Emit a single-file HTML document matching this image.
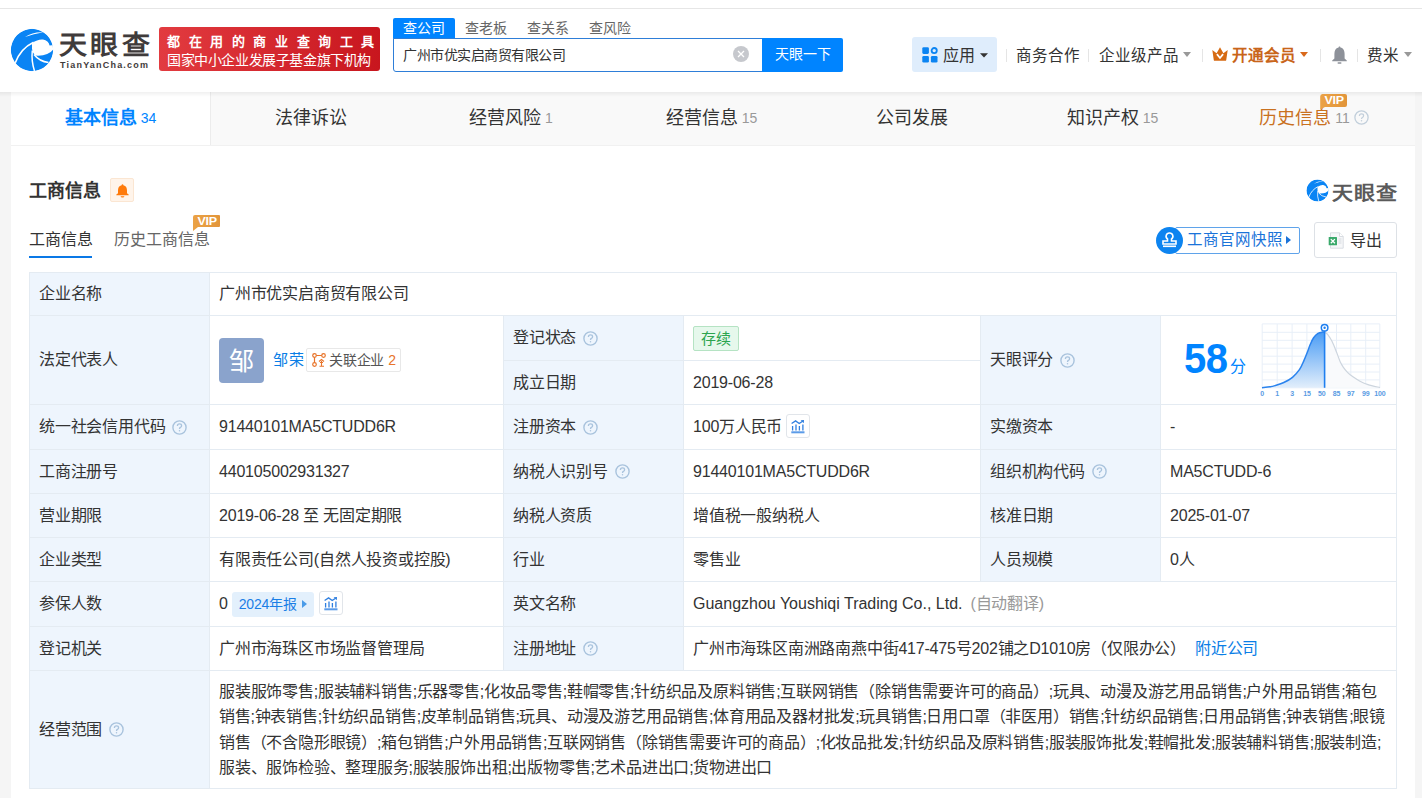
<!DOCTYPE html>
<html lang="zh-CN">
<head>
<meta charset="utf-8">
<style>
*{margin:0;padding:0;box-sizing:border-box}
html,body{width:1422px;height:798px;overflow:hidden;background:#f5f5f5;font-family:"Liberation Sans",sans-serif;color:#333}
.a{position:absolute;white-space:nowrap}
#hdr{position:absolute;left:0;top:0;width:1422px;height:92px;background:#fff;}
#topline{position:absolute;left:0;top:8px;width:1422px;height:1px;background:#e6e6e6}
#card{position:absolute;left:11px;top:92px;width:1404px;height:706px;background:#fff}
.tab{position:absolute;top:92px;height:53px;background:#f9f9f9;font-size:18px;line-height:53px;text-align:center;color:#333}
.tab small{font-size:14px;color:#999;margin-left:4px;position:relative;top:-1.5px}
.cell{position:absolute;border-right:1px solid #e4ebf2;border-bottom:1px solid #e4ebf2;font-size:16px;line-height:20px;padding-left:10px;display:flex;align-items:center;white-space:nowrap}
.lb{background:#eef5fd}
.q{display:inline-block;width:14px;height:14px;border:1px solid #b7cfe6;border-radius:50%;color:#9fbddb;font-size:10px;line-height:12px;text-align:center;margin-left:7px}

.c{position:absolute;font-size:16px;letter-spacing:-0.2px;line-height:22px;display:flex;align-items:center;white-space:nowrap;color:#333}
.c.lb{background:#eef5fd;padding-left:9px}
.c.v{background:#fff;padding-left:9px}
.tag-g{display:inline-block;height:25px;line-height:23px;padding:0 7px;border:1px solid #b5e3c3;background:#e6f8ec;color:#2ba44e;font-size:15px;border-radius:2px}
.tag-b{display:inline-flex;align-items:center;height:25px;padding:0 7px 0 7px;background:#e3f0fc;color:#1a7ee6;font-size:14px;border-radius:3px;margin-left:4px}
.tri{display:inline-block;width:0;height:0;border-left:5px solid #4a9be8;border-top:4px solid transparent;border-bottom:4px solid transparent;margin-left:5px}
.tag-o{display:inline-flex;align-items:center;height:24px;padding:0 4px 0 5px;border:1px solid #e8e8e8;color:#555;font-size:14px;border-radius:2px;margin-left:2px;letter-spacing:-0.2px}
.av{width:45px;height:45px;border-radius:4px;background:#8aa3cc;color:#fff;font-size:25px;line-height:47px;text-align:center;font-weight:500}
.ib{display:inline-flex;align-items:center;justify-content:center;width:24px;height:24px;border:1px solid #e1e5ea;border-radius:3px;margin-left:4px;padding-top:1px;position:relative;top:-1px}
.qi{margin-left:7px;flex:none}
.scope{white-space:nowrap;font-size:16px;line-height:25.3px;letter-spacing:-0.2px}
.sc{letter-spacing:-0.45px}
</style>
</head>
<body>
<div id="hdr"></div>
<div id="topline"></div>

<!-- logo -->
<svg class="a" style="left:8px;top:26px" width="48" height="48" viewBox="0 0 48 48"><defs><clipPath id="lc"><circle cx="24" cy="24" r="21.2"/></clipPath></defs><g clip-path="url(#lc)"><circle cx="24" cy="24" r="21.2" fill="#0a84f4"/><path d="M24 17.2Q30 13 35 13.6Q40.5 14.6 41.6 19.6L46 19L46 22.8Q40 30.5 27.5 29.6Q24.5 27 24 23Z" fill="#fff"/><path d="M7.2 37Q12.5 22.5 25.6 16.2" stroke="#fff" stroke-width="1.6" fill="none"/><path d="M17 10.9Q25 5.6 35.6 6.3Q25.5 7.8 17 10.9Z" fill="#fff"/><path d="M24.3 24.5Q23.2 35 26.5 45" stroke="#fff" stroke-width="1.5" fill="none"/><path d="M26 28.5Q31.5 35.5 40.5 36.5" stroke="#fff" stroke-width="1.5" fill="none"/></g></svg>
<div class="a" style="left:59px;top:28.5px;font-size:28px;line-height:36px;font-weight:900;color:#3f3b3b;letter-spacing:3.3px;transform:scaleY(0.92);transform-origin:0 0">天眼查</div>
<div class="a" style="left:60px;top:59px;font-size:9px;line-height:12px;font-weight:bold;color:#3f3b3b;letter-spacing:1.2px">TianYanCha.com</div>

<!-- red banner -->
<div class="a" style="left:159px;top:27px;width:221px;height:44px;border-radius:3px;background:linear-gradient(90deg,#e23b40,#c8161e)"></div>
<div class="a" style="left:167px;top:33px;font-size:13px;line-height:18px;font-weight:bold;color:#fff;letter-spacing:8.6px">都在用的商业查询工具</div>
<div class="a" style="left:167px;top:50.5px;font-size:14px;line-height:18px;color:#fff;letter-spacing:-0.4px;font-weight:500">国家中小企业发展子基金旗下机构</div>

<!-- search -->
<div class="a" style="left:393px;top:18px;width:62px;height:21px;background:#0084ff;border-radius:2px 2px 0 0;color:#fff;font-size:14px;line-height:20px;text-align:center">查公司</div>
<div class="a" style="left:465px;top:18px;font-size:14px;line-height:20px;color:#666">查老板</div>
<div class="a" style="left:527px;top:18px;font-size:14px;line-height:20px;color:#666">查关系</div>
<div class="a" style="left:589px;top:18px;font-size:14px;line-height:20px;color:#666">查风险</div>
<div class="a" style="left:393px;top:38px;width:370px;height:34px;border:1px solid #2e7ed8;border-radius:0 0 0 3px;background:#fff"></div>
<div class="a" style="left:403px;top:45px;font-size:14px;letter-spacing:-0.5px;line-height:20px;color:#333">广州市优实启商贸有限公司</div>
<svg class="a" style="left:733px;top:46px" width="16" height="16" viewBox="0 0 16 16"><circle cx="8" cy="8" r="8" fill="#c6c8cd"/><path d="M5 5L11 11M11 5L5 11" stroke="#fff" stroke-width="1.3"/></svg>
<div class="a" style="left:762px;top:38px;width:81px;height:34px;background:#0084ff;border-radius:0 2px 2px 0;color:#fff;font-size:14px;line-height:32px;text-align:center">天眼一下</div>

<!-- right nav -->
<div class="a" style="left:912px;top:37px;width:85px;height:35px;background:#dfedfc;border-radius:3px"></div>
<svg class="a" style="left:922px;top:47px" width="16" height="16" viewBox="0 0 16 16"><rect x="0.3" y="0.3" width="6.6" height="6.6" rx="1.3" fill="#0b84f2"/><rect x="0.3" y="8.9" width="6.6" height="6.6" rx="1.3" fill="#0b84f2"/><rect x="8.9" y="8.9" width="6.6" height="6.6" rx="1.3" fill="#0b84f2"/><circle cx="12.2" cy="3.6" r="2.6" fill="none" stroke="#0b84f2" stroke-width="1.8"/></svg>
<div class="a" style="left:943px;top:46px;font-size:16px;;line-height:20px;color:#333;letter-spacing:-0.5px">应用</div>
<svg class="a" style="left:980px;top:52.5px" width="8" height="5" viewBox="0 0 8 5"><path d="M0 0.3H8L4 4.6Z" fill="#333"/></svg>
<div class="a" style="left:1006px;top:49px;width:1px;height:13px;background:#e5e5e5"></div>
<div class="a" style="left:1016px;top:46px;font-size:15.5px;line-height:20px;color:#333">商务合作</div>
<div class="a" style="left:1088px;top:49px;width:1px;height:13px;background:#e5e5e5"></div>
<div class="a" style="left:1099px;top:46px;font-size:15.5px;line-height:20px;color:#333">企业级产品</div>
<svg class="a" style="left:1183px;top:52px" width="8" height="5" viewBox="0 0 8 5"><path d="M0 0H8L4 5Z" fill="#999"/></svg>
<div class="a" style="left:1202px;top:49px;width:1px;height:13px;background:#e5e5e5"></div>
<svg class="a" style="left:1212px;top:47px" width="16" height="14" viewBox="0 0 16 14"><path d="M0.3 3L4.6 6.2L8 0.2L11.4 6.2L15.7 3L14.2 13.2Q14 13.8 13.4 13.8H2.6Q2 13.8 1.8 13.2Z" fill="#d66a12"/><path d="M4.9 7.1L8 11L11.1 7.1" stroke="#fff" stroke-width="1.7" fill="none"/></svg>
<div class="a" style="left:1232px;top:45.5px;font-size:15.5px;line-height:20px;color:#c9651a;font-weight:bold">开通会员</div>
<svg class="a" style="left:1300px;top:52px" width="8" height="5" viewBox="0 0 8 5"><path d="M0 0H8L4 5Z" fill="#d9691b"/></svg>
<div class="a" style="left:1320px;top:49px;width:1px;height:13px;background:#e5e5e5"></div>
<svg class="a" style="left:1332px;top:46px" width="15" height="18" viewBox="0 0 15 18"><path d="M7.5 0.5C8.2 0.5 8.4 1 8.4 1.6C11.5 2.3 12.6 5 12.6 8V12.5L14.8 14.5V15.2H0.2V14.5L2.4 12.5V8C2.4 5 3.5 2.3 6.6 1.6C6.6 1 6.8 0.5 7.5 0.5Z" fill="#8d9199"/><rect x="5.5" y="16.3" width="4" height="1.5" rx=".7" fill="#8d9199"/></svg>
<div class="a" style="left:1357px;top:49px;width:1px;height:13px;background:#e5e5e5"></div>
<div class="a" style="left:1367px;top:46px;font-size:15.5px;line-height:20px;color:#333">费米</div>
<svg class="a" style="left:1404px;top:52px" width="8" height="5" viewBox="0 0 8 5"><path d="M0 0H8L4 5Z" fill="#999"/></svg>

<!-- card -->
<div id="card"></div>
<div class="tab" style="left:11px;width:199px;background:#fff;border-left:none;color:#0084ff;font-weight:bold">基本信息<small style="color:#0084ff;font-weight:normal">34</small></div>
<div class="tab" style="left:210px;width:201px;border-left:1px solid #ececec">法律诉讼</div>
<div class="tab" style="left:411px;width:200px">经营风险<small>1</small></div>
<div class="tab" style="left:611px;width:201px">经营信息<small>15</small></div>
<div class="tab" style="left:812px;width:200px">公司发展</div>
<div class="tab" style="left:1012px;width:201px">知识产权<small>15</small></div>
<div class="tab" style="left:1213px;width:202px;color:#c9711f;padding-right:0px">历史信息<small>11</small><svg width="15" height="15" viewBox="0 0 15 15" style="margin-left:4px;vertical-align:-1px"><circle cx="7.5" cy="7.5" r="6.6" fill="none" stroke="#c2cfdb" stroke-width="1.3"/><path d="M5.4 5.9Q5.4 3.9 7.5 3.9Q9.6 3.9 9.6 5.7Q9.6 6.8 8.4 7.4Q7.5 7.9 7.5 8.9" fill="none" stroke="#c2cfdb" stroke-width="1.2"/><circle cx="7.5" cy="10.8" r="0.75" fill="#c2cfdb"/></svg></div>
<div class="a" style="left:11px;top:145px;width:1404px;height:1px;background:#f1f1f1"></div>
<div class="a" style="left:0;top:92px;width:1422px;height:5px;background:linear-gradient(rgba(0,0,0,.06),rgba(0,0,0,0))"></div>
<svg class="a" style="left:1319px;top:93px" width="29" height="17" viewBox="0 0 29 17"><path d="M3.5 1H26Q28 1 28 3V12Q28 14 26 14H6L1.2 16.5V3.5Q1.2 1 3.5 1Z" fill="url(#vg)"/><text x="15.2" y="11.9" font-family="Liberation Sans" font-weight="bold" font-size="12.5" fill="#fff" text-anchor="middle" letter-spacing="-0.2" transform="scale(1,0.92)" >VIP</text></svg>


<!-- section title -->
<div class="a" style="left:29px;top:179px;font-size:18px;line-height:24px;font-weight:bold;color:#333">工商信息</div>
<div class="a" style="left:110px;top:178px;width:24px;height:24px;background:#fff4ea;border:1px solid #fbe6d2;border-radius:2px"></div>
<svg class="a" style="left:115.5px;top:183.5px" width="13" height="14" viewBox="0 0 13 14"><path d="M6.5 0.3C7.1 0.3 7.4 0.7 7.4 1.2C10 1.7 11 3.8 11 6.5V9.3L12.6 10.6Q13 11 12.6 11.3H0.4Q0 11 0.4 10.6L2 9.3V6.5C2 3.8 3 1.7 5.6 1.2C5.6 0.7 5.9 0.3 6.5 0.3Z" fill="#ff7a0a"/><path d="M4.6 12.2H8.4Q8.4 13.6 6.5 13.6Q4.6 13.6 4.6 12.2Z" fill="#ff7a0a"/></svg>

<svg class="a" style="left:1305px;top:178px" width="25" height="25" viewBox="0 0 48 48"><defs><clipPath id="lc2"><circle cx="24" cy="24" r="21.2"/></clipPath></defs><g clip-path="url(#lc2)"><circle cx="24" cy="24" r="21.2" fill="#0a84f4"/><path d="M24 17.2Q30 13 35 13.6Q40.5 14.6 41.6 19.6L46 19L46 22.8Q40 30.5 27.5 29.6Q24.5 27 24 23Z" fill="#fff"/><path d="M7.2 37Q12.5 22.5 25.6 16.2" stroke="#fff" stroke-width="1.6" fill="none"/><path d="M17 10.9Q25 5.6 35.6 6.3Q25.5 7.8 17 10.9Z" fill="#fff"/><path d="M24.3 24.5Q23.2 35 26.5 45" stroke="#fff" stroke-width="1.5" fill="none"/><path d="M26 28.5Q31.5 35.5 40.5 36.5" stroke="#fff" stroke-width="1.5" fill="none"/></g></svg>
<div class="a" style="left:1332px;top:180.5px;font-size:21px;line-height:28px;font-weight:bold;color:#5a5a5a;letter-spacing:1px;transform:scaleY(0.9);transform-origin:0 0">天眼查</div>

<!-- sub tabs -->
<div class="a" style="left:29px;top:229px;font-size:16px;line-height:22px;color:#333">工商信息</div>
<div class="a" style="left:29px;top:256px;width:63px;height:2px;background:#0a78e6"></div>
<div class="a" style="left:114px;top:229px;font-size:16px;line-height:22px;color:#666">历史工商信息</div>
<svg class="a" style="left:192px;top:214px" width="29" height="17" viewBox="0 0 29 17"><defs><linearGradient id="vg" x1="0" y1="0" x2="1" y2="0"><stop offset="0" stop-color="#eba246"/><stop offset="1" stop-color="#e2953a"/></linearGradient></defs><path d="M3 1H27Q28 1 28 2V12Q28 13 27 13H6L1 17V3Q1 1 3 1Z" fill="url(#vg)"/><text x="15.2" y="11.700000000000001" font-family="Liberation Sans" font-weight="bold" font-size="12.5" fill="#fff" text-anchor="middle" letter-spacing="-0.2" transform="scale(1,0.92)" >VIP</text></svg>

<!-- buttons -->
<div class="a" style="left:1175px;top:227px;width:125px;height:27px;border:1px solid #5fa3ea;border-radius:2px"></div>
<svg class="a" style="left:1156px;top:227px" width="27" height="27" viewBox="0 0 27 27"><circle cx="13.5" cy="13.5" r="13.5" fill="#0d84f0"/><path d="M13.5 6a3.3 3.3 0 0 1 2 6v2h4.5v3h-13v-3h4.5v-2a3.3 3.3 0 0 1 2-6z" fill="none" stroke="#fff" stroke-width="1.6"/><rect x="7" y="18.5" width="13" height="1.6" fill="#fff"/></svg>
<div class="a" style="left:1187px;top:229px;font-size:15.5px;line-height:22px;color:#1a73d9">工商官网快照</div>
<svg class="a" style="left:1286px;top:236px" width="5" height="8" viewBox="0 0 5 8"><path d="M0 0L5 4L0 8Z" fill="#1a73d9"/></svg>

<div class="a" style="left:1314px;top:222px;width:83px;height:36px;border:1px solid #dde1e6;border-radius:3px"></div>
<svg class="a" style="left:1328px;top:231.5px" width="16" height="17" viewBox="0 0 16 17"><path d="M2.5 0.8H11.5L15.2 4.5V16.2H2.5Z" fill="#f6f7f9" stroke="#d9dde2" stroke-width="1"/><path d="M11.5 0.8V4.5H15.2" fill="#fff" stroke="#d9dde2" stroke-width="1"/><path d="M10.5 7H13.5M10.5 9H13.5M10.5 11H13.5" stroke="#d5d9de" stroke-width="1"/><rect x="0.7" y="5" width="8.3" height="8.3" rx="0.5" fill="#3aa96b"/><path d="M2.8 7.1L6.9 11.2M6.9 7.1L2.8 11.2" stroke="#fff" stroke-width="1.3"/></svg>
<div class="a" style="left:1350px;top:229.5px;font-size:16px;line-height:22px;color:#333;letter-spacing:-0.5px">导出</div>

<div class="a" style="left:29px;top:272px;width:1368px;height:517px;background:#e4ebf2"></div>
<div class="c lb" style="left:30px;top:273px;width:179px;height:42px">企业名称</div>
<div class="c v" style="left:210px;top:273px;width:1186px;height:42px">广州市优实启商贸有限公司</div>
<div class="c lb" style="left:30px;top:316px;width:179px;height:88px">法定代表人</div>
<div class="c v" style="left:210px;top:316px;width:293px;height:88px"><div class="av">邹</div><span style="color:#0a7ee6;font-size:15px;margin-left:9px;letter-spacing:0.5px">邹荣</span><span class="tag-o"><svg width="14" height="14" viewBox="0 0 14 14" style="margin-right:3px;flex:none"><circle cx="2.5" cy="2.5" r="1.8" fill="none" stroke="#e8742a" stroke-width="1.2"/><circle cx="11.5" cy="2.5" r="1.8" fill="none" stroke="#e8742a" stroke-width="1.2"/><circle cx="2.5" cy="11.5" r="1.8" fill="none" stroke="#e8742a" stroke-width="1.2"/><path d="M4.3 2.5H9.7M2.5 4.3V9.7" stroke="#e8742a" stroke-width="1.2"/><path d="M7 8.5L9.5 6.5L12 8.5M8 9.5H11M9.5 8V13M7.5 13.3H12" stroke="#e8742a" stroke-width="1.1" fill="none"/></svg>关联企业<span style="color:#e8742a;margin-left:4px">2</span></span></div>
<div class="c lb" style="left:504px;top:316px;width:179px;height:44px">登记状态<svg class="qi" width="15" height="15" viewBox="0 0 15 15"><circle cx="7.5" cy="7.5" r="6.6" fill="none" stroke="#a9c3dd" stroke-width="1.4"/><path d="M5.4 5.9Q5.4 3.9 7.5 3.9Q9.6 3.9 9.6 5.7Q9.6 6.8 8.4 7.4Q7.5 7.9 7.5 8.9" fill="none" stroke="#a9c3dd" stroke-width="1.3"/><circle cx="7.5" cy="10.8" r="0.75" fill="#a9c3dd"/></svg></div>
<div class="c v" style="left:684px;top:316px;width:296px;height:44px"><span class="tag-g">存续</span></div>
<div class="c lb" style="left:504px;top:361px;width:179px;height:43px">成立日期</div>
<div class="c v" style="left:684px;top:361px;width:296px;height:43px">2019-06-28</div>
<div class="c lb" style="left:981px;top:316px;width:179px;height:88px">天眼评分<svg class="qi" width="15" height="15" viewBox="0 0 15 15"><circle cx="7.5" cy="7.5" r="6.6" fill="none" stroke="#a9c3dd" stroke-width="1.4"/><path d="M5.4 5.9Q5.4 3.9 7.5 3.9Q9.6 3.9 9.6 5.7Q9.6 6.8 8.4 7.4Q7.5 7.9 7.5 8.9" fill="none" stroke="#a9c3dd" stroke-width="1.3"/><circle cx="7.5" cy="10.8" r="0.75" fill="#a9c3dd"/></svg></div>
<div class="c v" style="left:1161px;top:316px;width:235px;height:88px"><span style="display:inline-block;font-size:40px;line-height:40px;font-weight:bold;color:#0084ff;margin-left:14px;letter-spacing:-0.5px;transform:translateY(-1px) scaleY(1.075);transform-origin:0 100%">58</span><span style="font-size:16px;color:#0084ff;margin-left:2px;margin-top:14px;position:relative;top:-0.5px">分</span><svg class="a" style="left:98px;top:2px" width="130" height="80" viewBox="0 0 130 80"><defs><linearGradient id="sg" x1="0" y1="0" x2="0" y2="1"><stop offset="0" stop-color="#4a9cf5"/><stop offset="1" stop-color="#e2eefb"/></linearGradient></defs><line x1="3.2" y1="5.9" x2="3.2" y2="69.8" stroke="#e8eff8" stroke-width="1"/><line x1="18.2" y1="5.9" x2="18.2" y2="69.8" stroke="#e8eff8" stroke-width="1"/><line x1="33.1" y1="5.9" x2="33.1" y2="69.8" stroke="#e8eff8" stroke-width="1"/><line x1="47.9" y1="5.9" x2="47.9" y2="69.8" stroke="#e8eff8" stroke-width="1"/><line x1="62.7" y1="5.9" x2="62.7" y2="69.8" stroke="#e8eff8" stroke-width="1"/><line x1="77.5" y1="5.9" x2="77.5" y2="69.8" stroke="#e8eff8" stroke-width="1"/><line x1="91.8" y1="5.9" x2="91.8" y2="69.8" stroke="#e8eff8" stroke-width="1"/><line x1="106.7" y1="5.9" x2="106.7" y2="69.8" stroke="#e8eff8" stroke-width="1"/><line x1="120.8" y1="5.9" x2="120.8" y2="69.8" stroke="#e8eff8" stroke-width="1"/><line x1="3.2" y1="5.9" x2="120.8" y2="5.9" stroke="#e8eff8" stroke-width="1"/><line x1="3.2" y1="14.3" x2="120.8" y2="14.3" stroke="#e8eff8" stroke-width="1"/><line x1="3.2" y1="22.3" x2="120.8" y2="22.3" stroke="#e8eff8" stroke-width="1"/><line x1="3.2" y1="30.2" x2="120.8" y2="30.2" stroke="#e8eff8" stroke-width="1"/><line x1="3.2" y1="38.2" x2="120.8" y2="38.2" stroke="#e8eff8" stroke-width="1"/><line x1="3.2" y1="46.1" x2="120.8" y2="46.1" stroke="#e8eff8" stroke-width="1"/><line x1="3.2" y1="54.0" x2="120.8" y2="54.0" stroke="#e8eff8" stroke-width="1"/><line x1="3.2" y1="61.9" x2="120.8" y2="61.9" stroke="#e8eff8" stroke-width="1"/><line x1="3.2" y1="69.8" x2="120.8" y2="69.8" stroke="#e8eff8" stroke-width="1"/><path d="M65.60 14.40 C66.10 14.72 67.37 14.82 68.60 16.30 C69.83 17.78 71.53 20.38 73.00 23.30 C74.47 26.22 76.02 30.35 77.40 33.80 C78.78 37.25 80.13 41.42 81.30 44.00 C82.47 46.58 83.20 47.58 84.40 49.30 C85.60 51.02 86.97 52.75 88.50 54.30 C90.03 55.85 91.52 57.12 93.60 58.60 C95.68 60.08 98.43 61.87 101.00 63.20 C103.57 64.53 105.67 65.53 109.00 66.60 C112.33 67.67 119.00 69.10 121.00 69.60 L121.0 69.8 L65.6 69.8Z" fill="#f9fafc"/><path d="M65.60 14.40 C66.10 14.72 67.37 14.82 68.60 16.30 C69.83 17.78 71.53 20.38 73.00 23.30 C74.47 26.22 76.02 30.35 77.40 33.80 C78.78 37.25 80.13 41.42 81.30 44.00 C82.47 46.58 83.20 47.58 84.40 49.30 C85.60 51.02 86.97 52.75 88.50 54.30 C90.03 55.85 91.52 57.12 93.60 58.60 C95.68 60.08 98.43 61.87 101.00 63.20 C103.57 64.53 105.67 65.53 109.00 66.60 C112.33 67.67 119.00 69.10 121.00 69.60" fill="none" stroke="#cdd5de" stroke-width="1.2"/><path d="M3.00 69.70 C4.33 69.55 8.83 69.15 11.00 68.80 C13.17 68.45 13.70 68.32 16.00 67.60 C18.30 66.88 21.88 65.88 24.80 64.50 C27.72 63.12 30.87 61.48 33.50 59.30 C36.13 57.12 38.70 54.18 40.60 51.40 C42.50 48.62 43.58 45.53 44.90 42.60 C46.22 39.67 47.47 36.43 48.50 33.80 C49.53 31.17 50.08 29.13 51.10 26.80 C52.12 24.47 53.28 21.70 54.60 19.80 C55.92 17.90 57.53 16.35 59.00 15.40 C60.47 14.45 62.30 14.27 63.40 14.10 C64.50 13.93 65.23 14.35 65.60 14.40 L65.6 69.8 L3.0 69.8Z" fill="url(#sg)"/><path d="M3.00 69.70 C4.33 69.55 8.83 69.15 11.00 68.80 C13.17 68.45 13.70 68.32 16.00 67.60 C18.30 66.88 21.88 65.88 24.80 64.50 C27.72 63.12 30.87 61.48 33.50 59.30 C36.13 57.12 38.70 54.18 40.60 51.40 C42.50 48.62 43.58 45.53 44.90 42.60 C46.22 39.67 47.47 36.43 48.50 33.80 C49.53 31.17 50.08 29.13 51.10 26.80 C52.12 24.47 53.28 21.70 54.60 19.80 C55.92 17.90 57.53 16.35 59.00 15.40 C60.47 14.45 62.30 14.27 63.40 14.10 C64.50 13.93 65.23 14.35 65.60 14.40" fill="none" stroke="#2a83ee" stroke-width="1.5"/><line x1="65.6" y1="12" x2="65.6" y2="69.8" stroke="#1f7ff0" stroke-width="1.6"/><circle cx="65.6" cy="9.7" r="3.3" fill="#fff" stroke="#1f7ff0" stroke-width="1.5"/><circle cx="65.6" cy="9.7" r="1.2" fill="#1f7ff0"/><text x="3.2" y="78.19999999999999" font-family="Liberation Sans" font-size="7" font-weight="bold" fill="#5a9be3" text-anchor="middle" letter-spacing="-0.2">0</text><text x="18.2" y="78.19999999999999" font-family="Liberation Sans" font-size="7" font-weight="bold" fill="#5a9be3" text-anchor="middle" letter-spacing="-0.2">1</text><text x="33.1" y="78.19999999999999" font-family="Liberation Sans" font-size="7" font-weight="bold" fill="#5a9be3" text-anchor="middle" letter-spacing="-0.2">3</text><text x="47.9" y="78.19999999999999" font-family="Liberation Sans" font-size="7" font-weight="bold" fill="#5a9be3" text-anchor="middle" letter-spacing="-0.2">15</text><text x="62.7" y="78.19999999999999" font-family="Liberation Sans" font-size="7" font-weight="bold" fill="#5a9be3" text-anchor="middle" letter-spacing="-0.2">50</text><text x="77.5" y="78.19999999999999" font-family="Liberation Sans" font-size="7" font-weight="bold" fill="#5a9be3" text-anchor="middle" letter-spacing="-0.2">85</text><text x="91.8" y="78.19999999999999" font-family="Liberation Sans" font-size="7" font-weight="bold" fill="#5a9be3" text-anchor="middle" letter-spacing="-0.2">97</text><text x="106.7" y="78.19999999999999" font-family="Liberation Sans" font-size="7" font-weight="bold" fill="#5a9be3" text-anchor="middle" letter-spacing="-0.2">99</text><text x="120.8" y="78.19999999999999" font-family="Liberation Sans" font-size="7" font-weight="bold" fill="#5a9be3" text-anchor="middle" letter-spacing="-0.2">100</text></svg></div>
<div class="c lb" style="left:30px;top:405px;width:179px;height:44px">统一社会信用代码<svg class="qi" width="15" height="15" viewBox="0 0 15 15"><circle cx="7.5" cy="7.5" r="6.6" fill="none" stroke="#a9c3dd" stroke-width="1.4"/><path d="M5.4 5.9Q5.4 3.9 7.5 3.9Q9.6 3.9 9.6 5.7Q9.6 6.8 8.4 7.4Q7.5 7.9 7.5 8.9" fill="none" stroke="#a9c3dd" stroke-width="1.3"/><circle cx="7.5" cy="10.8" r="0.75" fill="#a9c3dd"/></svg></div>
<div class="c v" style="left:210px;top:405px;width:293px;height:44px">91440101MA5CTUDD6R</div>
<div class="c lb" style="left:504px;top:405px;width:179px;height:44px">注册资本<svg class="qi" width="15" height="15" viewBox="0 0 15 15"><circle cx="7.5" cy="7.5" r="6.6" fill="none" stroke="#a9c3dd" stroke-width="1.4"/><path d="M5.4 5.9Q5.4 3.9 7.5 3.9Q9.6 3.9 9.6 5.7Q9.6 6.8 8.4 7.4Q7.5 7.9 7.5 8.9" fill="none" stroke="#a9c3dd" stroke-width="1.3"/><circle cx="7.5" cy="10.8" r="0.75" fill="#a9c3dd"/></svg></div>
<div class="c v" style="left:684px;top:405px;width:296px;height:44px">100万人民币<span class="ib"><svg width="14" height="14" viewBox="0 0 14 14"><rect x="0.3" y="11.3" width="13.2" height="2" fill="#5b9be8"/><path d="M1.6 6V10.4M5 4.6V10.4M8.4 6V10.4M11.9 4.6V10.4" stroke="#2f7fe0" stroke-width="1.3"/><path d="M0.6 3.5L4.6 0.9L8.2 3.5L11.6 1.2" stroke="#2f7fe0" stroke-width="1.3" fill="none"/><path d="M9.6 0.3L13 0L12.8 3.3Z" fill="#2f7fe0"/></svg></span></div>
<div class="c lb" style="left:981px;top:405px;width:179px;height:44px">实缴资本</div>
<div class="c v" style="left:1161px;top:405px;width:235px;height:44px">-</div>
<div class="c lb" style="left:30px;top:450px;width:179px;height:43px">工商注册号</div>
<div class="c v" style="left:210px;top:450px;width:293px;height:43px">440105002931327</div>
<div class="c lb" style="left:504px;top:450px;width:179px;height:43px">纳税人识别号<svg class="qi" width="15" height="15" viewBox="0 0 15 15"><circle cx="7.5" cy="7.5" r="6.6" fill="none" stroke="#a9c3dd" stroke-width="1.4"/><path d="M5.4 5.9Q5.4 3.9 7.5 3.9Q9.6 3.9 9.6 5.7Q9.6 6.8 8.4 7.4Q7.5 7.9 7.5 8.9" fill="none" stroke="#a9c3dd" stroke-width="1.3"/><circle cx="7.5" cy="10.8" r="0.75" fill="#a9c3dd"/></svg></div>
<div class="c v" style="left:684px;top:450px;width:296px;height:43px">91440101MA5CTUDD6R</div>
<div class="c lb" style="left:981px;top:450px;width:179px;height:43px">组织机构代码<svg class="qi" width="15" height="15" viewBox="0 0 15 15"><circle cx="7.5" cy="7.5" r="6.6" fill="none" stroke="#a9c3dd" stroke-width="1.4"/><path d="M5.4 5.9Q5.4 3.9 7.5 3.9Q9.6 3.9 9.6 5.7Q9.6 6.8 8.4 7.4Q7.5 7.9 7.5 8.9" fill="none" stroke="#a9c3dd" stroke-width="1.3"/><circle cx="7.5" cy="10.8" r="0.75" fill="#a9c3dd"/></svg></div>
<div class="c v" style="left:1161px;top:450px;width:235px;height:43px">MA5CTUDD-6</div>
<div class="c lb" style="left:30px;top:494px;width:179px;height:43px">营业期限</div>
<div class="c v" style="left:210px;top:494px;width:293px;height:43px">2019-06-28 至 无固定期限</div>
<div class="c lb" style="left:504px;top:494px;width:179px;height:43px">纳税人资质</div>
<div class="c v" style="left:684px;top:494px;width:296px;height:43px">增值税一般纳税人</div>
<div class="c lb" style="left:981px;top:494px;width:179px;height:43px">核准日期</div>
<div class="c v" style="left:1161px;top:494px;width:235px;height:43px">2025-01-07</div>
<div class="c lb" style="left:30px;top:538px;width:179px;height:43px">企业类型</div>
<div class="c v" style="left:210px;top:538px;width:293px;height:43px">有限责任公司(自然人投资或控股)</div>
<div class="c lb" style="left:504px;top:538px;width:179px;height:43px">行业</div>
<div class="c v" style="left:684px;top:538px;width:296px;height:43px">零售业</div>
<div class="c lb" style="left:981px;top:538px;width:179px;height:43px">人员规模</div>
<div class="c v" style="left:1161px;top:538px;width:235px;height:43px">0人</div>
<div class="c lb" style="left:30px;top:582px;width:179px;height:44px">参保人数</div>
<div class="c v" style="left:210px;top:582px;width:293px;height:44px">0<span class="tag-b">2024年报<i class="tri"></i></span><span class="ib" style="margin-left:5px"><svg width="14" height="14" viewBox="0 0 14 14"><rect x="0.3" y="11.3" width="13.2" height="2" fill="#5b9be8"/><path d="M1.6 6V10.4M5 4.6V10.4M8.4 6V10.4M11.9 4.6V10.4" stroke="#2f7fe0" stroke-width="1.3"/><path d="M0.6 3.5L4.6 0.9L8.2 3.5L11.6 1.2" stroke="#2f7fe0" stroke-width="1.3" fill="none"/><path d="M9.6 0.3L13 0L12.8 3.3Z" fill="#2f7fe0"/></svg></span></div>
<div class="c lb" style="left:504px;top:582px;width:179px;height:44px">英文名称</div>
<div class="c v" style="left:684px;top:582px;width:712px;height:44px"><span style="letter-spacing:0">Guangzhou Youshiqi Trading Co., Ltd.</span><span style="color:#999;margin-left:8px">(自动翻译)</span></div>
<div class="c lb" style="left:30px;top:627px;width:179px;height:43px">登记机关</div>
<div class="c v" style="left:210px;top:627px;width:293px;height:43px">广州市海珠区市场监督管理局</div>
<div class="c lb" style="left:504px;top:627px;width:179px;height:43px">注册地址<svg class="qi" width="15" height="15" viewBox="0 0 15 15"><circle cx="7.5" cy="7.5" r="6.6" fill="none" stroke="#a9c3dd" stroke-width="1.4"/><path d="M5.4 5.9Q5.4 3.9 7.5 3.9Q9.6 3.9 9.6 5.7Q9.6 6.8 8.4 7.4Q7.5 7.9 7.5 8.9" fill="none" stroke="#a9c3dd" stroke-width="1.3"/><circle cx="7.5" cy="10.8" r="0.75" fill="#a9c3dd"/></svg></div>
<div class="c v" style="left:684px;top:627px;width:712px;height:43px">广州市海珠区南洲路南燕中街417-475号202铺之D1010房（仅限办公）<span style="color:#0a7ee6;margin-left:9px">附近公司</span></div>
<div class="c lb" style="left:30px;top:671px;width:179px;height:117px">经营范围<svg class="qi" width="15" height="15" viewBox="0 0 15 15"><circle cx="7.5" cy="7.5" r="6.6" fill="none" stroke="#a9c3dd" stroke-width="1.4"/><path d="M5.4 5.9Q5.4 3.9 7.5 3.9Q9.6 3.9 9.6 5.7Q9.6 6.8 8.4 7.4Q7.5 7.9 7.5 8.9" fill="none" stroke="#a9c3dd" stroke-width="1.3"/><circle cx="7.5" cy="10.8" r="0.75" fill="#a9c3dd"/></svg></div>
<div class="c v" style="left:210px;top:671px;width:1186px;height:117px"><div class="scope">服装服饰零售<span class="sc">;</span>服装辅料销售<span class="sc">;</span>乐器零售<span class="sc">;</span>化妆品零售<span class="sc">;</span>鞋帽零售<span class="sc">;</span>针纺织品及原料销售<span class="sc">;</span>互联网销售（除销售需要许可的商品）<span class="sc">;</span>玩具、动漫及游艺用品销售<span class="sc">;</span>户外用品销售<span class="sc">;</span>箱包<br>销售<span class="sc">;</span>钟表销售<span class="sc">;</span>针纺织品销售<span class="sc">;</span>皮革制品销售<span class="sc">;</span>玩具、动漫及游艺用品销售<span class="sc">;</span>体育用品及器材批发<span class="sc">;</span>玩具销售<span class="sc">;</span>日用口罩（非医用）销售<span class="sc">;</span>针纺织品销售<span class="sc">;</span>日用品销售<span class="sc">;</span>钟表销售<span class="sc">;</span>眼镜<br>销售（不含隐形眼镜）<span class="sc">;</span>箱包销售<span class="sc">;</span>户外用品销售<span class="sc">;</span>互联网销售（除销售需要许可的商品）<span class="sc">;</span>化妆品批发<span class="sc">;</span>针纺织品及原料销售<span class="sc">;</span>服装服饰批发<span class="sc">;</span>鞋帽批发<span class="sc">;</span>服装辅料销售<span class="sc">;</span>服装制造<span class="sc">;</span><br>服装、服饰检验、整理服务<span class="sc">;</span>服装服饰出租<span class="sc">;</span>出版物零售<span class="sc">;</span>艺术品进出口<span class="sc">;</span>货物进出口</div></div>
</body>
</html>
